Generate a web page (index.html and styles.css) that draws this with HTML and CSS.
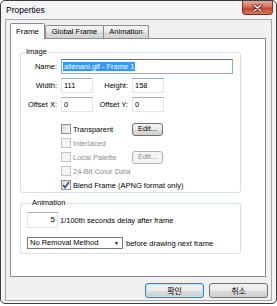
FILE: index.html
```html
<!DOCTYPE html>
<html lang="ko">
<head>
  <meta charset="UTF-8">
  <title>Properties</title>
  <link rel="stylesheet" href="styles.css">
</head>
<body>

  <div class="window">
    <div class="titlebar">
      <span class="title">Properties</span>
      <div class="close">
        <svg width="11" height="8" viewBox="0 0 11 8">
          <path d="M2 1 L9 7 M9 1 L2 7" stroke="#5a1a10" stroke-width="3" stroke-linecap="round"/>
          <path d="M2 1 L9 7 M9 1 L2 7" stroke="#fff" stroke-width="1.6" stroke-linecap="round"/>
        </svg>
      </div>
    </div>

    <div class="client">
      <div class="tabs">
        <div class="tab active">Frame</div>
        <div class="tab tab-global">Global Frame</div>
        <div class="tab tab-anim">Animation</div>
      </div>

      <div class="panel">
        <fieldset class="group group-image">
          <legend>Image</legend>

          <div class="row row-first">
            <span class="lbl">Name:</span>
            <div class="input input-name"><span class="sel">alienani.gif - Frame 1</span></div>
          </div>
          <div class="row">
            <span class="lbl">Width:</span>
            <div class="input input-num">111</div>
            <span class="lbl lbl2">Height:</span>
            <div class="input input-num">158</div>
          </div>
          <div class="row">
            <span class="lbl">Offset X:</span>
            <div class="input input-num">0</div>
            <span class="lbl lbl2">Offset Y:</span>
            <div class="input input-num">0</div>
          </div>

          <div class="checks">
            <div class="check-row">
              <span class="box"></span>
              <span class="check-text">Transparent</span>
              <div class="btn btn-small">Edit...</div>
            </div>
            <div class="check-row disabled">
              <span class="box"></span>
              <span class="check-text">Interlaced</span>
            </div>
            <div class="check-row disabled">
              <span class="box"></span>
              <span class="check-text">Local Palette</span>
              <div class="btn btn-small">Edit...</div>
            </div>
            <div class="check-row disabled">
              <span class="box"></span>
              <span class="check-text">24-Bit Color Data</span>
            </div>
            <div class="check-row">
              <span class="box">
                <svg width="8" height="8" viewBox="0 0 8 8">
                  <path d="M1 4 L3 6.5 L7 1" fill="none" stroke="#2c4f8f" stroke-width="1.6"/>
                </svg>
              </span>
              <span class="check-text">Blend Frame (APNG format only)</span>
            </div>
          </div>
        </fieldset>

        <fieldset class="group group-anim">
          <legend>Animation</legend>
          <div class="anim-row anim-delay">
            <div class="input input-spin">5</div>
            <span class="after">1/100th seconds delay after frame</span>
          </div>
          <div class="anim-row anim-method">
            <div class="select">
              <span>No Removal Method</span>
              <span class="arrow">&#9660;</span>
            </div>
            <span class="after">before drawing next frame</span>
          </div>
        </fieldset>
      </div>

      <div class="buttons">
        <div class="btn btn-dialog btn-default">확인</div>
        <div class="btn btn-dialog">취소</div>
      </div>
    </div>
  </div>

</body>
</html>
```

FILE: styles.css
```css
* {
  box-sizing: border-box;
}

body {
  margin: 0;
  background: #fff;
  font-family: "Liberation Sans", Arial, "Noto Sans CJK KR", sans-serif;
  font-size: 7.5px;
  color: #000;
}

.window {
  width: 277px;
  height: 304px;
  border: 1px solid #3c3c3c;
  border-radius: 5px;
  background: #f3f4f6;
  display: flex;
  flex-direction: column;
  overflow: hidden;
}

.titlebar {
  height: 18px;
  display: flex;
  justify-content: space-between;
  align-items: flex-start;
}

.title {
  padding: 4px 0 0 5px;
  font-size: 8.5px;
  line-height: 10px;
}

.close {
  width: 31px;
  height: 14px;
  margin-right: 3px;
  border: 1px solid #7a3024;
  border-top: none;
  border-radius: 0 0 4px 4px;
  background: linear-gradient(#eaa698, #d8705c 45%, #c7452e 55%, #d8775f);
  display: flex;
  align-items: center;
  justify-content: center;
}

.client {
  margin: 0 4px 2px 4px;
  height: 282px;
  border: 1px solid #a8a8a8;
  background: #f0f0f0;
  padding: 3px 3px 0 4px;
  display: flex;
  flex-direction: column;
}

/* tab strip */
.tabs {
  height: 15px;
  display: flex;
  align-items: flex-end;
}

.tab {
  height: 13px;
  border: 1px solid #898c95;
  border-bottom: none;
  border-radius: 2px 2px 0 0;
  background: linear-gradient(#f4f4f4, #e9e9e9 50%, #dcdcdc 51%, #d4d4d4);
  display: flex;
  align-items: center;
  justify-content: center;
  line-height: 10px;
}

.tab.active {
  width: 35px;
  height: 16px;
  margin-bottom: -1px;
  position: relative;
  z-index: 1;
  background: #fff;
  font-size: 8px;
}

.tab-global {
  width: 59px;
}

.tab-anim {
  width: 46px;
  margin-left: -1px;
}

.panel {
  width: 256px;
  height: 239px;
  border: 1px solid #898c95;
  background: #fff;
  padding: 0 0 0 9px;
}

/* group boxes */
.group {
  width: 221px;
  margin: 0;
  border: 1px solid #d5dfe5;
  border-radius: 3px;
  padding: 2px 0 0 0;
  min-width: 0;
}

.group legend {
  margin-left: 4px;
  padding: 0 1px;
  line-height: 10px;
}

.group-image {
  margin-top: 8px;
}

.group-anim {
  margin-top: 5px;
  padding: 0 0 4px 6px;
}

.row {
  height: 15px;
  display: flex;
  align-items: center;
  margin-top: 4px;
}

.row-first {
  margin-top: 0;
}

.lbl {
  width: 36px;
  margin-right: 4px;
  text-align: right;
  white-space: nowrap;
}

.lbl2 {
  width: 35px;
}

.input {
  height: 15px;
  background: #fff;
  border: 1px solid #e0e5ea;
  border-top-color: #abadb3;
  padding: 0 2px;
  line-height: 13px;
  white-space: nowrap;
  overflow: hidden;
}

.input-num {
  width: 32px;
}

.input-name {
  width: 172px;
  border-color: #7fb1d9;
  border-top-color: #3d7bad;
  padding-left: 1px;
}

.sel {
  background: #3399ff;
  color: #fff;
  padding: 0 1px;
}

/* checkboxes */
.checks {
  margin: 10px 0 0 40px;
}

.check-row {
  height: 14px;
  display: flex;
  align-items: center;
}

.box {
  width: 10px;
  height: 10px;
  border: 1px solid #8e8f8f;
  background: linear-gradient(135deg, #d9d9d9, #fafafa);
  margin-right: 2px;
  display: flex;
  align-items: center;
  justify-content: center;
}

.check-text {
  width: 59px;
  white-space: nowrap;
}

.disabled {
  color: #8d8d8d;
}

.disabled .box {
  border-color: #c4c4c4;
  background: #f4f4f4;
}

.btn {
  border: 1px solid #707070;
  border-radius: 3px;
  background: linear-gradient(#f2f2f2, #ebebeb 50%, #dddddd 51%, #cfcfcf);
  display: flex;
  align-items: center;
  justify-content: center;
  white-space: nowrap;
}

.btn-small {
  width: 31px;
  height: 13px;
  line-height: 10px;
}

.disabled .btn-small {
  border-color: #adb2b5;
  background: #f4f4f4;
  color: #8d8d8d;
}

/* animation group */
.anim-row {
  display: flex;
  align-items: center;
}

.anim-delay {
  margin-top: 4px;
}

.input-spin {
  width: 31px;
  height: 16px;
  text-align: right;
  line-height: 14px;
  font-size: 8px;
}

.anim-method {
  margin-top: 9px;
}

.select {
  width: 96px;
  height: 12px;
  border: 1px solid #767676;
  background: #fff;
  display: flex;
  align-items: center;
  justify-content: space-between;
  padding: 0 3px 0 2px;
  line-height: 10px;
}

.arrow {
  font-size: 5px;
}

.after {
  margin-left: 2px;
  white-space: nowrap;
}

.anim-method .after {
  margin-left: 3px;
}

/* dialog buttons */
.buttons {
  margin-top: 6px;
  display: flex;
  justify-content: flex-end;
  gap: 5px;
}

.btn-dialog {
  width: 59px;
  height: 15px;
  font-family: "Noto Sans CJK KR", sans-serif;
  font-size: 8px;
  line-height: 10px;
}

.btn-default {
  border-color: #3c7fb1;
  box-shadow: inset 0 0 0 1px #bfe3f7;
}
```
